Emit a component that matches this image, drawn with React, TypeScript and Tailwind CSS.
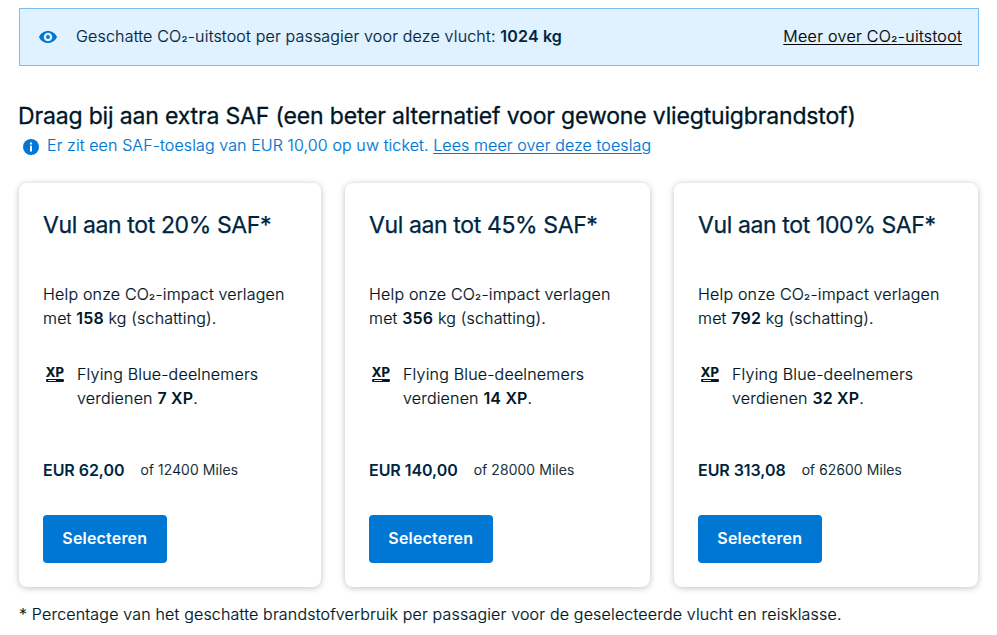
import React from "react";

type Offer = {
  percentage: string;
  kg: string;
  xp: string;
  price: string;
  miles: string;
};

const offers: Offer[] = [
  { percentage: "20%", kg: "158", xp: "7", price: "62,00", miles: "12400" },
  { percentage: "45%", kg: "356", xp: "14", price: "140,00", miles: "28000" },
  { percentage: "100%", kg: "792", xp: "32", price: "313,08", miles: "62600" },
];

function Co2() {
  return (
    <>
      CO<span className="align-[2px] text-[14px] leading-none">₂</span>
    </>
  );
}

function EyeIcon() {
  return (
    <svg viewBox="0 0 18 12" className="h-3 w-[18px] shrink-0" aria-hidden="true">
      <path
        fill="#0077d2"
        fillRule="evenodd"
        d="M9 0C5 0 1.500 2.400 0 6c1.500 3.600 5 6 9 6s7.500-2.400 9-6c-1.500-3.600-5-6-9-6Zm0 10.300a4.300 4.300 0 1 1 0-8.600 4.300 4.300 0 0 1 0 8.600Zm0-6.200a1.900 1.900 0 1 0 0 3.800 1.900 1.900 0 0 0 0-3.800Z"
      />
    </svg>
  );
}

function InfoIcon() {
  return (
    <svg viewBox="0 0 16 16" className="mt-[3px] size-4 shrink-0" aria-hidden="true">
      <circle cx="8" cy="8" r="8" fill="#0077d2" />
      <path fill="#fff" d="M7 3.500h2v2H7zM7 6.700h2v5.800H7z" />
    </svg>
  );
}

function XpIcon() {
  return (
    <span className="mt-[5px] flex h-[15px] w-[18px] shrink-0 flex-col items-center" aria-hidden="true">
      <span className="h-[11px] text-[13px] leading-[11px] font-bold tracking-[0.200px]">XP</span>
      <svg viewBox="0 0 18 3" className="mt-px h-[3px] w-[18px] shrink-0">
        <rect width="18" height="3" rx="1.300" fill="#001a33" />
        <rect x="2" y="1" width="8" height="1" rx="0.500" fill="#fff" />
      </svg>
    </span>
  );
}

function OfferCard({ percentage, kg, xp, price, miles }: Offer) {
  return (
    <article className="flex h-[404px] flex-col items-start rounded-lg bg-white px-6 pt-6 whitespace-nowrap shadow-[0_1px_6px_rgba(0,0,0,0.25)]">
      <h2 className="text-[23px] leading-9 font-normal tracking-[-0.38px] text-[#00263f] [-webkit-text-stroke:0.25px]">
        Vul aan tot {percentage} SAF*
      </h2>
      <p className="mt-[39px] leading-6">
        Help onze <Co2 />-impact verlagen
        <br />
        met <b className="font-semibold [-webkit-text-stroke:0]">{kg}</b> kg (schatting).
      </p>
      <div className="mt-8 flex gap-[13px] pl-[3px]">
        <XpIcon />
        <p className="leading-6">
          Flying Blue-deelnemers
          <br />
          verdienen <b className="font-semibold [-webkit-text-stroke:0]">{xp} XP</b>.
        </p>
      </div>
      <div className="mt-12 flex h-6 items-start gap-4 leading-6">
        <b className="font-semibold tracking-[-0.050px] text-[#00263f] [-webkit-text-stroke:0]">EUR {price}</b>
        <span className="text-sm leading-6 tracking-[0.150px]">of {miles} Miles</span>
      </div>
      <button className="mt-[33px] flex h-12 w-[123.500px] items-center justify-center rounded bg-[#0077d2] pb-0.5 text-base font-semibold text-white [-webkit-text-stroke:0]">
        Selecteren
      </button>
    </article>
  );
}

export default function App() {
  return (
    <main className="h-[635px] w-[997px] overflow-hidden bg-white pt-2 pr-[18px] pl-[19px] font-['Inter',sans-serif] text-base font-light tracking-[0.18px] whitespace-nowrap text-[#001626] [-webkit-text-stroke:0.2px]">
      <section className="flex h-[58px] items-center border border-[#7dbcf0] bg-[#e0f1ff] pr-4 pl-[19px] leading-6">
        <EyeIcon />
        <p className="mb-0.5 ml-[19px] text-[#00263f]">
          Geschatte <Co2 />-uitstoot per passagier voor deze vlucht:{" "}
          <b className="font-semibold [-webkit-text-stroke:0]">1024 kg</b>
        </p>
        <a className="mb-0.5 ml-auto tracking-[0.3px] text-black underline underline-offset-2">
          Meer over <Co2 />-uitstoot
        </a>
      </section>
      <h1 className="mt-8 -ml-px text-[23px] leading-9 font-normal tracking-[-0.16px] [-webkit-text-stroke:0.3px]">
        Draag bij aan extra SAF (een beter alternatief voor gewone vliegtuigbrandstof)
      </h1>
      <div className="-mt-px flex items-center gap-2 pl-1 leading-6 tracking-[0.11px] text-[#0077d2]">
        <InfoIcon />
        <p>
          Er zit een SAF-toeslag van EUR 10,00 op uw ticket. <a className="underline underline-offset-2">Lees meer over deze toeslag</a>
        </p>
      </div>
      <section className="mt-[26px] grid w-[959px] grid-cols-[302px_305px_304px] gap-6">
        {offers.map((offer) => (
          <OfferCard key={offer.percentage} {...offer} />
        ))}
      </section>
      <p className="mt-[15px] leading-6">
        * Percentage van het geschatte brandstofverbruik per passagier voor de geselecteerde vlucht en reisklasse.
      </p>
    </main>
  );
}
